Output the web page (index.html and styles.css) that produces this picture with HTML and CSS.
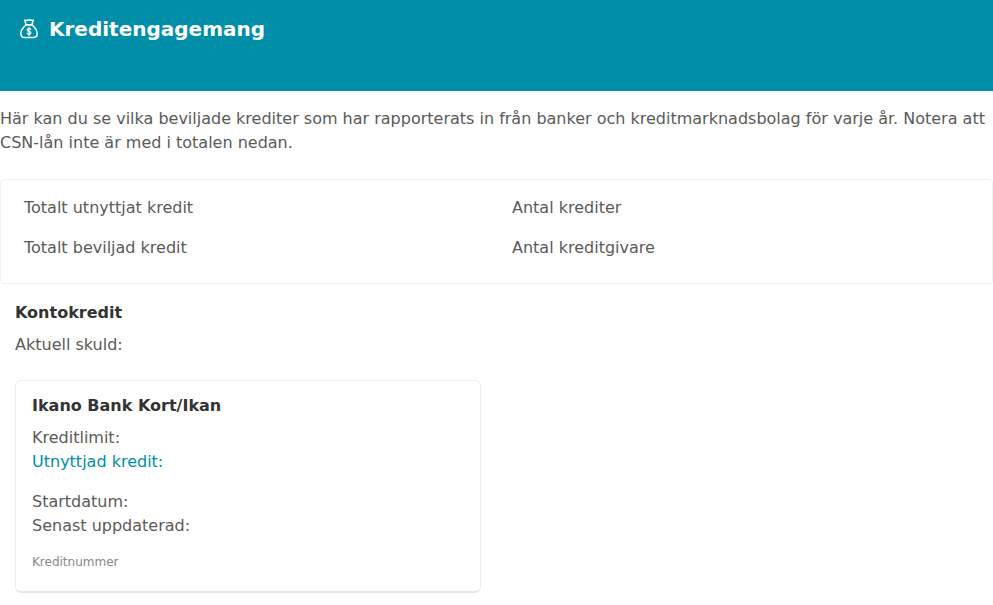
FILE: index.html
```html
<!DOCTYPE html>
<html lang="sv">
<head>
<meta charset="utf-8">
<title>Kreditengagemang</title>
<link rel="stylesheet" href="styles.css">
</head>
<body>
<header class="banner">
  <svg class="banner-icon" viewBox="0 0 18 20" width="18" height="20" fill="none" stroke="#fff" stroke-width="1.5" stroke-linejoin="round" stroke-linecap="round" aria-hidden="true">
    <path d="M6.100 5.700 4.800 1.200c1.300.6 2.800-.4 4.200-.1 1.400-.3 2.900.7 4.200.1l-1.300 4.500z"/>
    <path d="M6.100 5.700h5.800c2.500 2.200 5.300 5.700 5.300 8.900 0 2.500-1.600 4-3.900 4H4.700C2.400 18.600.8 17.100.8 14.600c0-3.200 2.800-6.700 5.300-8.900z"/>
    <path stroke-width="1.200" d="M10.700 10.500c-.3-.7-1-1-1.700-1-1 0-1.800.5-1.800 1.400 0 2 3.700 1 3.700 3 0 .9-.8 1.400-1.900 1.400-.8 0-1.500-.3-1.900-1M9 8.400v8"/>
  </svg>
  <h1 class="banner-title">Kreditengagemang</h1>
</header>
<p class="intro">Här kan du se vilka beviljade krediter som har rapporterats in från banker och kreditmarknadsbolag för varje år. Notera att CSN-lån inte är med i totalen nedan.</p>
<section class="summary">
  <div class="summary-item">Totalt utnyttjat kredit</div>
  <div class="summary-item">Antal krediter</div>
  <div class="summary-item">Totalt beviljad kredit</div>
  <div class="summary-item">Antal kreditgivare</div>
</section>
<section class="group">
  <h2 class="group-title">Kontokredit</h2>
  <p class="group-debt">Aktuell skuld:</p>
  <article class="card">
    <h3 class="card-title">Ikano Bank Kort/Ikan</h3>
    <div class="card-block">
      <div>Kreditlimit:</div>
      <div class="accent">Utnyttjad kredit:</div>
    </div>
    <div class="card-block">
      <div>Startdatum:</div>
      <div>Senast uppdaterad:</div>
    </div>
    <div class="card-note">Kreditnummer</div>
  </article>
</section>
</body>
</html>
```
FILE: styles.css
```css
* {
  box-sizing: border-box;
}

html, body {
  margin: 0;
  padding: 0;
  background: #fff;
}

body {
  font-family: "DejaVu Sans", sans-serif;
  font-size: 16px;
  line-height: 24px;
  color: #5a5a5a;
  overflow: hidden;
}

.banner {
  display: flex;
  align-items: flex-start;
  gap: 11px;
  height: 91px;
  padding: 17px 20px 0;
  background: #008ea8;
  color: #fff;
}

.banner-icon {
  flex: none;
  margin-top: 2px;
}

.banner-title {
  margin: 0;
  font-size: 20px;
  line-height: 24px;
  font-weight: 700;
}

.intro {
  margin: 15px 0 24px;
  padding-top: 1px;
}

.summary {
  display: grid;
  grid-template-columns: 488px 1fr;
  grid-auto-rows: 40px;
  height: 105px;
  padding: 8px 0 0 23px;
  margin-bottom: 16px;
  border: 1px solid #f1f1f0;
  border-radius: 4px;
}

.summary-item {
  display: flex;
  align-items: center;
}

.group {
  padding: 1px 15px 0;
}

.group-title {
  margin: 0 0 8px;
  font-size: 16px;
  line-height: 24px;
  font-weight: 700;
  color: #333;
}

.group-debt {
  margin: 0 0 23px;
}

.card {
  width: 466px;
  height: 213px;
  padding: 13px 16px 0;
  border: 1px solid #f0efef;
  border-bottom: 2px solid #e8e8e8;
  border-radius: 6px;
}

.card-title {
  margin: 0 0 8px;
  font-size: 16px;
  line-height: 24px;
  font-weight: 700;
  color: #333;
}

.card-block + .card-block {
  margin-top: 16px;
}

.accent {
  color: #008ea8;
}

.card-note {
  margin-top: 12px;
  font-size: 12px;
  line-height: 24px;
  color: #888;
}
```
